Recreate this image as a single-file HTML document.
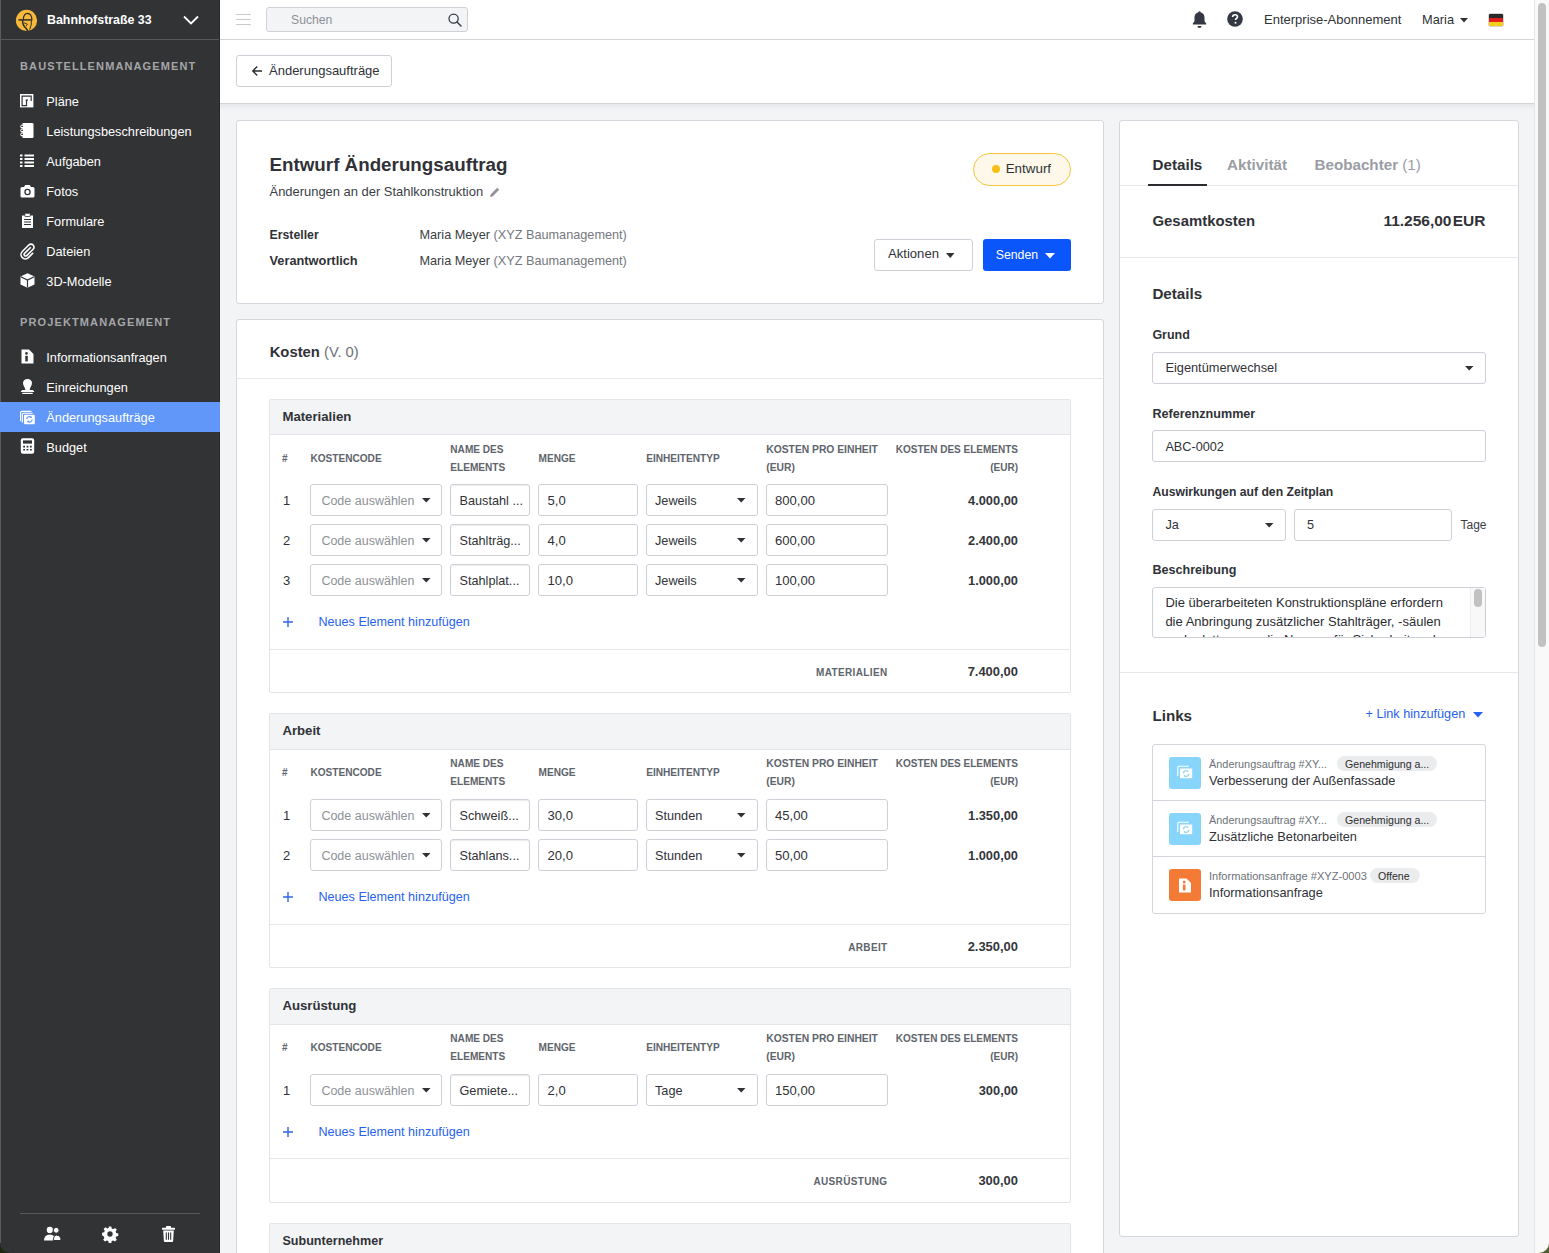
<!DOCTYPE html>
<html><head><meta charset="utf-8">
<style>
*{box-sizing:border-box;margin:0;padding:0}
html,body{width:1549px;height:1253px;overflow:hidden}
body{font-family:"Liberation Sans",sans-serif;color:#303237;background:#f3f4f6;position:relative}
.a{position:absolute}
.t{position:absolute;white-space:nowrap}
svg.a{overflow:visible}
</style></head><body>
<div class="a" style="left:0px;top:1241px;width:12px;height:12px;background:#1d2a10"></div>
<div class="a" style="left:1537px;top:1241px;width:12px;height:12px;background:#4f6030"></div>
<div class="a" style="left:220px;top:0px;width:1314px;height:40px;background:#fff;border-bottom:1px solid #d2d4d8"></div>
<div class="a" style="left:220px;top:40px;width:1314px;height:64px;background:#fff;border-bottom:1px solid #d0d2d6"></div>
<div class="a" style="left:220px;top:104px;width:1314px;height:6px;background:linear-gradient(#e7e8eb,#f3f4f6)"></div>
<div class="a" style="left:1534px;top:0px;width:15px;height:1253px;background:#f9f9f9;border-left:1px solid #e6e6e6;border-bottom-right-radius:10px"></div>
<div class="a" style="left:1538px;top:3px;width:8px;height:644px;background:#c1c1c1;border-radius:4px"></div>
<div class="a" style="left:236px;top:14px;width:15px;height:1px;background:#c9cacd"></div>
<div class="a" style="left:236px;top:19px;width:15px;height:1px;background:#c9cacd"></div>
<div class="a" style="left:236px;top:24px;width:15px;height:1px;background:#c9cacd"></div>
<div class="a" style="left:266px;top:7px;width:202px;height:25px;background:#f3f4f6;border:1px solid #cfd1d6;border-radius:3px;"></div>
<div class="t" style="top:10.17px;font-size:12.2px;line-height:20px;color:#8e9197;left:291px;">Suchen</div>
<svg class="a" style="left:448px;top:13px" width="14" height="14" viewBox="0 0 14 14"><circle cx="5.6" cy="5.6" r="4.6" fill="none" stroke="#343844" stroke-width="1.25"/><path d="M9 9L13 13" stroke="#343844" stroke-width="1.5" stroke-linecap="round"/></svg>
<svg class="a" style="left:1192px;top:11px" width="15" height="17" viewBox="0 0 15 17"><path d="M7.5 1.2c-3.2 0-5 2.3-5 5.3v3.8L.8 12.6v.9h13.4v-.9l-1.7-2.3V6.5c0-3-1.8-5.3-5-5.3z" fill="#343844"/><path d="M5.4 15a2.1 2.1 0 0 0 4.2 0z" fill="#343844"/><circle cx="7.5" cy="1.3" r="1.1" fill="#343844"/></svg>
<svg class="a" style="left:1227px;top:11px" width="16" height="16" viewBox="0 0 16 16"><circle cx="8" cy="8" r="7.8" fill="#343844"/><path d="M5.6 6.1c0-1.5 1-2.4 2.5-2.4s2.4.9 2.4 2.1c0 1.6-2 1.7-2 3.3" fill="none" stroke="#fff" stroke-width="1.6"/><circle cx="8.5" cy="11.8" r="1" fill="#fff"/></svg>
<div class="t" style="top:10.49px;font-size:13.0px;line-height:20px;color:#303237;left:1264px;">Enterprise-Abonnement</div>
<div class="t" style="top:10.06px;font-size:12.8px;line-height:20px;color:#303237;left:1422px;">Maria</div>
<svg class="a" style="left:1460px;top:18px" width="8" height="5.0" viewBox="0 0 8 5.0"><path d="M0 0H8L4.0 4.5Z" fill="#303237"/></svg>
<div class="a" style="left:1489px;top:14px;width:14px;height:12px;border-radius:1px;background:linear-gradient(#2a2a2a 0 33.3%,#dd1f1f 33.3% 66.6%,#f7cd1b 66.6%);box-shadow:0 0 0 .5px rgba(0,0,0,.35)"></div>
<div class="a" style="left:236px;top:55px;width:156px;height:32px;background:#fff;border:1px solid #cdd0d6;border-radius:3px;"></div>
<svg class="a" style="left:251px;top:65px" width="12" height="12" viewBox="0 0 12 12"><path d="M11 6H1.8M6.2 1.6L1.8 6l4.4 4.4" fill="none" stroke="#2b2d31" stroke-width="1.4"/></svg>
<div class="t" style="top:61.49px;font-size:13.0px;line-height:20px;color:#303237;left:269px;">Änderungsaufträge</div>
<div class="a" style="left:0px;top:0px;width:220px;height:1253px;background:#323335;border-right:1px solid #27282a;border-bottom-left-radius:10px"></div>
<div class="a" style="left:0px;top:0px;width:1px;height:1243px;background:#5b5c5f"></div>
<div class="a" style="left:0px;top:39px;width:219px;height:1px;background:#57585b"></div>
<svg class="a" style="left:16px;top:10px" width="21" height="21" viewBox="0 0 21 21"><circle cx="10.5" cy="10.4" r="10.6" fill="#f6b93b"/><path d="M7.3 9.6Q7.6 3.4 11.6 3.4Q15.6 3.6 15.9 9.6" fill="none" stroke="#2f2c26" stroke-width="1.1"/><path d="M2.4 9.9H16.4" stroke="#2f2c26" stroke-width="1.5"/><path d="M6.6 10Q6.4 15.5 10 18.2L11.8 21" fill="none" stroke="#2f2c26" stroke-width="1.5"/><path d="M15.4 10.2Q15.8 15.5 13.6 19.6" fill="none" stroke="#2f2c26" stroke-width="1"/><path d="M8 12.8L11.4 14.2L10 16" fill="none" stroke="#2f2c26" stroke-width=".9"/></svg>
<div class="t" style="top:9.70px;font-size:12.4px;line-height:20px;color:#fff;font-weight:bold;left:47px;">Bahnhofstraße 33</div>
<svg class="a" style="left:183px;top:15px" width="16" height="10" viewBox="0 0 16 10"><path d="M1 1.5L8 8.5L15 1.5" fill="none" stroke="#fff" stroke-width="1.8"/></svg>
<div class="t" style="top:56.19px;font-size:11px;line-height:20px;color:#a5a6a9;font-weight:bold;letter-spacing:1.12px;left:20px;">BAUSTELLENMANAGEMENT</div>
<div class="t" style="top:311.99px;font-size:11px;line-height:20px;color:#a5a6a9;font-weight:bold;letter-spacing:1.12px;left:20px;">PROJEKTMANAGEMENT</div>
<div class="a" style="left:0px;top:402px;width:220px;height:30px;background:#6097f8"></div>
<div class="t" style="top:91.58px;font-size:12.75px;line-height:20px;color:#fff;left:46.3px;">Pläne</div>
<div class="t" style="top:121.58px;font-size:12.75px;line-height:20px;color:#fff;left:46.3px;">Leistungsbeschreibungen</div>
<div class="t" style="top:151.58px;font-size:12.75px;line-height:20px;color:#fff;left:46.3px;">Aufgaben</div>
<div class="t" style="top:181.58px;font-size:12.75px;line-height:20px;color:#fff;left:46.3px;">Fotos</div>
<div class="t" style="top:211.58px;font-size:12.75px;line-height:20px;color:#fff;left:46.3px;">Formulare</div>
<div class="t" style="top:241.58px;font-size:12.75px;line-height:20px;color:#fff;left:46.3px;">Dateien</div>
<div class="t" style="top:271.58px;font-size:12.75px;line-height:20px;color:#fff;left:46.3px;">3D-Modelle</div>
<div class="t" style="top:347.58px;font-size:12.75px;line-height:20px;color:#fff;left:46.3px;">Informationsanfragen</div>
<div class="t" style="top:377.58px;font-size:12.75px;line-height:20px;color:#fff;left:46.3px;">Einreichungen</div>
<div class="t" style="top:407.58px;font-size:12.75px;line-height:20px;color:#fff;left:46.3px;">Änderungsaufträge</div>
<div class="t" style="top:437.58px;font-size:12.75px;line-height:20px;color:#fff;left:46.3px;">Budget</div>
<svg class="a" style="left:19.8px;top:93.7px" width="14" height="14" viewBox="0 0 14 14"><rect x="0" y="0" width="13.4" height="13.4" fill="#fff"/><path d="M11.15 6.9V2.05H2.1V11.55H6.5V5.9M5.6 6.1H8" fill="none" stroke="#323335" stroke-width="1.2"/></svg>
<svg class="a" style="left:18px;top:122px" width="17" height="17" viewBox="0 0 17 17"><path d="M4.6 .9H14.2Q15.5 .9 15.5 2.2V14.7Q15.5 16 14.2 16H4.6Z" fill="#fff"/><circle cx="4.3" cy="4.4" r="2" fill="#fff"/><circle cx="4.3" cy="8.4" r="2" fill="#fff"/><circle cx="4.3" cy="12.4" r="2" fill="#fff"/><path d="M3.2 4.4H5M3.2 8.4H5M3.2 12.4H5" stroke="#323335" stroke-width="1.1"/></svg>
<svg class="a" style="left:20px;top:154px" width="14" height="14" viewBox="0 0 14 14"><path d="M0 1.5h2.5M0 5h2.5M0 8.5h2.5M0 12h2.5M4.5 1.5H14M4.5 5H14M4.5 8.5H14M4.5 12H14" stroke="#fff" stroke-width="2"/></svg>
<svg class="a" style="left:20px;top:184px" width="15" height="15" viewBox="0 0 15 15"><path d="M.5 4.5q0-1.5 1.5-1.5h2l1.3-2h4.4l1.3 2h2q1.5 0 1.5 1.5v7.5q0 1.5-1.5 1.5H2q-1.5 0-1.5-1.5z" fill="#fff"/><circle cx="7.5" cy="8" r="3.2" fill="#323335"/><circle cx="7.5" cy="8" r="1.9" fill="#fff"/></svg>
<svg class="a" style="left:20px;top:213px" width="15" height="15" viewBox="0 0 15 15"><path d="M2 2.5h11v12.5H2z" fill="#fff"/><rect x="4.8" y=".3" width="5.4" height="3.2" rx=".6" fill="#fff" stroke="#323335" stroke-width=".8"/><path d="M4 6.5h7M4 9h7M4 11.5h7" stroke="#323335" stroke-width="1.1"/></svg>
<svg class="a" style="left:20px;top:243px" width="15" height="15" viewBox="0 0 15 15"><path d="M10.8 4.2L4.6 10.4a1.5 1.5 0 0 0 2.2 2.2l6.3-6.3a3 3 0 0 0-4.3-4.3L2.3 8.5a4.3 4.3 0 0 0 6.1 6.1l4.7-4.7" fill="none" stroke="#fff" stroke-width="1.6"/></svg>
<svg class="a" style="left:20px;top:273px" width="15" height="15" viewBox="0 0 15 15"><path d="M7.5.3l7 3.3v7.8l-7 3.3-7-3.3V3.6z" fill="#fff"/><path d="M.8 3.8l6.7 3.3 6.7-3.3M7.5 7.1v7.3" fill="none" stroke="#323335" stroke-width="1.2"/></svg>
<svg class="a" style="left:20px;top:349px" width="15" height="15" viewBox="0 0 15 15"><path d="M1.5.5h7.5l4.5 4.5v9.5h-12z" fill="#fff"/><path d="M9 .5v4.5h4.5" fill="#323335" opacity=".0"/><rect x="5.3" y="6.8" width="2.5" height="5.6" fill="#323335"/><circle cx="6.5" cy="4.4" r="1.3" fill="#323335"/></svg>
<svg class="a" style="left:20px;top:378px" width="15" height="17" viewBox="0 0 15 17"><path d="M7.5.9C10.3.9 12 2.6 12 5.1C12 7.4 10.3 9 9.6 11.9H5.4C4.7 9 3 7.4 3 5.1C3 2.6 4.7.9 7.5.9Z" fill="#fff"/><path d="M2.4 11.9H12.6L14.1 13.3V14H.9V13.3Z" fill="#fff"/><rect x="2.1" y="14.8" width="10.7" height="1.2" rx=".5" fill="#fff"/></svg>
<svg class="a" style="left:20px;top:410px" width="15" height="15" viewBox="0 0 15 15"><path d="M.6 11.3V2.6Q.6 1.3 1.9 1.3h9.5" fill="none" stroke="#fff" stroke-width="1.2"/><path d="M2.4 12.6V4.2q0-1 1-1h9.3" fill="none" stroke="#fff" stroke-width="1.1"/><rect x="4" y="4.8" width="10.8" height="9.4" rx="1" fill="#fff"/><path d="M6.8 9.2a2.6 2.6 0 0 1 4.6-1.6M12.2 9.6a2.6 2.6 0 0 1-4.6 1.6" fill="none" stroke="#6097f8" stroke-width="1.2"/><path d="M11.6 6.2v1.8H9.8z" fill="#6097f8"/><path d="M7.4 12.4v-1.6H9.2z" fill="#6097f8"/></svg>
<svg class="a" style="left:20px;top:438px" width="15" height="16" viewBox="0 0 15 16"><rect x=".8" y=".3" width="13.4" height="15.4" rx="2" fill="#fff"/><rect x="3" y="2.4" width="9" height="3.2" fill="#323335"/><path d="M3.2 8.6h1.8M6.6 8.6h1.8M10 8.6h1.8M3.2 11.8h1.8M6.6 11.8h1.8M10 11.8h1.8" stroke="#323335" stroke-width="1.6"/></svg>
<div class="a" style="left:20px;top:1213px;width:180px;height:1px;background:#58595c"></div>
<svg class="a" style="left:44px;top:1226px" width="17" height="15" viewBox="0 0 17 15"><circle cx="5.8" cy="3.9" r="3.1" fill="#fff"/><path d="M0 14.5q0-5.6 5.8-5.9q5.8.3 5.8 5.9z" fill="#fff"/><circle cx="12.2" cy="4.3" r="2.9" fill="#fff" stroke="#323335" stroke-width="1"/><path d="M9.2 14.5q.4-5.2 3.2-5.4q4.6.3 4.6 5.4z" fill="#fff" stroke="#323335" stroke-width="1"/></svg>
<svg class="a" style="left:102px;top:1226px" width="16" height="16" viewBox="0 0 16 16"><path d="M6.7.5h2.6l.4 2.1 1.5.6 1.8-1.2 1.8 1.8-1.2 1.8.6 1.5 2.1.4v2.6l-2.1.4-.6 1.5 1.2 1.8-1.8 1.8-1.8-1.2-1.5.6-.4 2.1H6.7l-.4-2.1-1.5-.6-1.8 1.2-1.8-1.8 1.2-1.8-.6-1.5L.1 9.3V6.7l2.1-.4.6-1.5-1.2-1.8 1.8-1.8 1.8 1.2 1.5-.6z" fill="#fff"/><circle cx="8" cy="8" r="2.7" fill="#323335"/></svg>
<svg class="a" style="left:162px;top:1226px" width="13" height="16" viewBox="0 0 13 16"><rect x="0" y="1.8" width="13" height="2" rx=".5" fill="#fff"/><rect x="4" y="0" width="5" height="2.5" rx=".7" fill="#fff"/><path d="M1.2 4.6h10.6l-.7 10.4q-.1 1-1 1H2.9q-.9 0-1-1z" fill="#fff"/><path d="M4.3 6.6v7.2M6.5 6.6v7.2M8.7 6.6v7.2" stroke="#323335" stroke-width="1.1"/></svg>
<div class="a" style="left:236px;top:120px;width:868px;height:184px;background:#fff;border:1px solid #d4d7dc;border-radius:3px"></div>
<div class="a" style="left:236px;top:319px;width:868px;height:1000px;background:#fff;border:1px solid #d4d7dc;border-radius:3px"></div>
<div class="a" style="left:1119px;top:120px;width:400px;height:1117px;background:#fff;border:1px solid #d4d7dc;border-radius:3px"></div>
<div class="t" style="top:155.28px;font-size:18.8px;line-height:20px;color:#303237;font-weight:bold;left:269.5px;">Entwurf Änderungsauftrag</div>
<div class="t" style="top:181.71px;font-size:12.95px;line-height:20px;color:#3b3e44;left:269.5px;">Änderungen an der Stahlkonstruktion</div>
<svg class="a" style="left:489px;top:187px" width="11" height="11" viewBox="0 0 11 11"><path d="M1 10l.6-2.6L8.2.8l2 2-6.6 6.6z" fill="#8f9298"/></svg>
<div class="t" style="top:225.34px;font-size:12.3px;line-height:20px;color:#303237;font-weight:bold;left:269.5px;">Ersteller</div>
<div class="t" style="top:250.96px;font-size:12.8px;line-height:20px;color:#303237;font-weight:bold;left:269.5px;">Verantwortlich</div>
<div class="t" style="top:225.20px;font-size:12.7px;line-height:20px;color:#3b3e44;left:419.5px;">Maria Meyer <span style="color:#74777e">(XYZ Baumanagement)</span></div>
<div class="t" style="top:251.00px;font-size:12.7px;line-height:20px;color:#3b3e44;left:419.5px;">Maria Meyer <span style="color:#74777e">(XYZ Baumanagement)</span></div>
<div class="a" style="left:973px;top:153px;width:98px;height:33px;background:#fdf8e9;border:1px solid #f4c43b;border-radius:17px"></div>
<div class="a" style="left:992px;top:165.2px;width:8px;height:8px;background:#f6be16;border-radius:50%"></div>
<div class="t" style="top:158.95px;font-size:13.4px;line-height:20px;color:#303237;left:1005.7px;">Entwurf</div>
<div class="a" style="left:874px;top:239px;width:99px;height:32px;background:#fff;border:1px solid #cdd0d6;border-radius:3px;"></div>
<div class="t" style="top:244.46px;font-size:13.1px;line-height:20px;color:#303237;left:888px;">Aktionen</div>
<svg class="a" style="left:945.5px;top:252.5px" width="8.5" height="5.5" viewBox="0 0 8.5 5.5"><path d="M0 0H8.5L4.25 5Z" fill="#303237"/></svg>
<div class="a" style="left:983px;top:239px;width:88px;height:32px;background:#0b56fb;border-radius:3px"></div>
<div class="t" style="top:245.24px;font-size:12.3px;line-height:20px;color:#fff;left:995.7px;">Senden</div>
<svg class="a" style="left:1045.2px;top:253px" width="10" height="6.0" viewBox="0 0 10 6.0"><path d="M0 0H10L5.0 5.5Z" fill="#fff"/></svg>
<div class="t" style="top:341.57px;font-size:14.8px;line-height:20px;color:#303237;font-weight:bold;left:269.7px;">Kosten <span style="font-weight:normal;color:#6d7178">(V. 0)</span></div>
<div class="a" style="left:237px;top:378px;width:866px;height:1px;background:#e6e8eb"></div>
<div class="a" style="left:269px;top:399px;width:802px;height:294px;background:#fff;border:1px solid #e2e4e8;border-radius:2px"></div>
<div class="a" style="left:270px;top:400px;width:800px;height:35px;background:#f3f4f6;border-bottom:1px solid #e2e4e8"></div>
<div class="t" style="top:407.02px;font-size:13.2px;line-height:20px;color:#303237;font-weight:bold;left:282.4px;">Materialien</div>
<div class="t" style="top:449.33px;font-size:10px;line-height:20px;color:#60646b;font-weight:bold;left:282px;">#</div>
<div class="t" style="top:449.30px;font-size:10.1px;line-height:20px;color:#60646b;font-weight:bold;left:310.4px;">KOSTENCODE</div>
<div class="t" style="top:439.70px;font-size:10.1px;line-height:20px;color:#60646b;font-weight:bold;left:450.3px;">NAME DES</div>
<div class="t" style="top:458.10px;font-size:10.1px;line-height:20px;color:#60646b;font-weight:bold;left:450.3px;">ELEMENTS</div>
<div class="t" style="top:449.30px;font-size:10.1px;line-height:20px;color:#60646b;font-weight:bold;left:538.5px;">MENGE</div>
<div class="t" style="top:449.30px;font-size:10.1px;line-height:20px;color:#60646b;font-weight:bold;left:646.2px;">EINHEITENTYP</div>
<div class="t" style="top:439.63px;font-size:10.3px;line-height:20px;color:#60646b;font-weight:bold;left:766.3px;">KOSTEN PRO EINHEIT</div>
<div class="t" style="top:458.03px;font-size:10.3px;line-height:20px;color:#60646b;font-weight:bold;left:766.3px;">(EUR)</div>
<div class="t" style="top:439.73px;font-size:10.0px;line-height:20px;color:#60646b;font-weight:bold;left:218px;width:800px;text-align:right;">KOSTEN DES ELEMENTS</div>
<div class="t" style="top:458.13px;font-size:10.0px;line-height:20px;color:#60646b;font-weight:bold;left:218px;width:800px;text-align:right;">(EUR)</div>
<div class="t" style="top:491.19px;font-size:13px;line-height:20px;color:#303237;left:283px;">1</div>
<div class="a" style="left:310px;top:484px;width:132px;height:32px;background:#fff;border:1px solid #cdd0d6;border-radius:3px;"></div>
<div class="t" style="top:491.37px;font-size:12.5px;line-height:20px;color:#8e9197;left:321.4px;">Code auswählen</div>
<svg class="a" style="left:422px;top:498px" width="8.5" height="5.0" viewBox="0 0 8.5 5.0"><path d="M0 0H8.5L4.25 4.5Z" fill="#303237"/></svg>
<div class="a" style="left:450px;top:484px;width:80px;height:32px;background:#fff;border:1px solid #cdd0d6;border-radius:3px;box-shadow:inset 0 1px 1px rgba(0,0,0,.08)"></div>
<div class="t" style="top:491.30px;font-size:12.7px;line-height:20px;color:#303237;left:459.5px;">Baustahl ...</div>
<div class="a" style="left:538px;top:484px;width:100px;height:32px;background:#fff;border:1px solid #cdd0d6;border-radius:3px;"></div>
<div class="t" style="top:491.16px;font-size:13.1px;line-height:20px;color:#303237;left:547.5px;">5,0</div>
<div class="a" style="left:646px;top:484px;width:112px;height:32px;background:#fff;border:1px solid #cdd0d6;border-radius:3px;"></div>
<div class="t" style="top:491.30px;font-size:12.7px;line-height:20px;color:#303237;left:655px;">Jeweils</div>
<svg class="a" style="left:737px;top:498px" width="8.5" height="5.0" viewBox="0 0 8.5 5.0"><path d="M0 0H8.5L4.25 4.5Z" fill="#303237"/></svg>
<div class="a" style="left:766px;top:484px;width:122px;height:32px;background:#fff;border:1px solid #cdd0d6;border-radius:3px;"></div>
<div class="t" style="top:491.16px;font-size:13.1px;line-height:20px;color:#303237;left:775px;">800,00</div>
<div class="t" style="top:491.24px;font-size:12.85px;line-height:20px;color:#34363b;font-weight:bold;left:218px;width:800px;text-align:right;">4.000,00</div>
<div class="t" style="top:531.19px;font-size:13px;line-height:20px;color:#303237;left:283px;">2</div>
<div class="a" style="left:310px;top:524px;width:132px;height:32px;background:#fff;border:1px solid #cdd0d6;border-radius:3px;"></div>
<div class="t" style="top:531.37px;font-size:12.5px;line-height:20px;color:#8e9197;left:321.4px;">Code auswählen</div>
<svg class="a" style="left:422px;top:538px" width="8.5" height="5.0" viewBox="0 0 8.5 5.0"><path d="M0 0H8.5L4.25 4.5Z" fill="#303237"/></svg>
<div class="a" style="left:450px;top:524px;width:80px;height:32px;background:#fff;border:1px solid #cdd0d6;border-radius:3px;box-shadow:inset 0 1px 1px rgba(0,0,0,.08)"></div>
<div class="t" style="top:531.30px;font-size:12.7px;line-height:20px;color:#303237;left:459.5px;">Stahlträg...</div>
<div class="a" style="left:538px;top:524px;width:100px;height:32px;background:#fff;border:1px solid #cdd0d6;border-radius:3px;"></div>
<div class="t" style="top:531.16px;font-size:13.1px;line-height:20px;color:#303237;left:547.5px;">4,0</div>
<div class="a" style="left:646px;top:524px;width:112px;height:32px;background:#fff;border:1px solid #cdd0d6;border-radius:3px;"></div>
<div class="t" style="top:531.30px;font-size:12.7px;line-height:20px;color:#303237;left:655px;">Jeweils</div>
<svg class="a" style="left:737px;top:538px" width="8.5" height="5.0" viewBox="0 0 8.5 5.0"><path d="M0 0H8.5L4.25 4.5Z" fill="#303237"/></svg>
<div class="a" style="left:766px;top:524px;width:122px;height:32px;background:#fff;border:1px solid #cdd0d6;border-radius:3px;"></div>
<div class="t" style="top:531.16px;font-size:13.1px;line-height:20px;color:#303237;left:775px;">600,00</div>
<div class="t" style="top:531.24px;font-size:12.85px;line-height:20px;color:#34363b;font-weight:bold;left:218px;width:800px;text-align:right;">2.400,00</div>
<div class="t" style="top:571.19px;font-size:13px;line-height:20px;color:#303237;left:283px;">3</div>
<div class="a" style="left:310px;top:564px;width:132px;height:32px;background:#fff;border:1px solid #cdd0d6;border-radius:3px;"></div>
<div class="t" style="top:571.37px;font-size:12.5px;line-height:20px;color:#8e9197;left:321.4px;">Code auswählen</div>
<svg class="a" style="left:422px;top:578px" width="8.5" height="5.0" viewBox="0 0 8.5 5.0"><path d="M0 0H8.5L4.25 4.5Z" fill="#303237"/></svg>
<div class="a" style="left:450px;top:564px;width:80px;height:32px;background:#fff;border:1px solid #cdd0d6;border-radius:3px;box-shadow:inset 0 1px 1px rgba(0,0,0,.08)"></div>
<div class="t" style="top:571.30px;font-size:12.7px;line-height:20px;color:#303237;left:459.5px;">Stahlplat...</div>
<div class="a" style="left:538px;top:564px;width:100px;height:32px;background:#fff;border:1px solid #cdd0d6;border-radius:3px;"></div>
<div class="t" style="top:571.16px;font-size:13.1px;line-height:20px;color:#303237;left:547.5px;">10,0</div>
<div class="a" style="left:646px;top:564px;width:112px;height:32px;background:#fff;border:1px solid #cdd0d6;border-radius:3px;"></div>
<div class="t" style="top:571.30px;font-size:12.7px;line-height:20px;color:#303237;left:655px;">Jeweils</div>
<svg class="a" style="left:737px;top:578px" width="8.5" height="5.0" viewBox="0 0 8.5 5.0"><path d="M0 0H8.5L4.25 4.5Z" fill="#303237"/></svg>
<div class="a" style="left:766px;top:564px;width:122px;height:32px;background:#fff;border:1px solid #cdd0d6;border-radius:3px;"></div>
<div class="t" style="top:571.16px;font-size:13.1px;line-height:20px;color:#303237;left:775px;">100,00</div>
<div class="t" style="top:571.24px;font-size:12.85px;line-height:20px;color:#34363b;font-weight:bold;left:218px;width:800px;text-align:right;">1.000,00</div>
<svg class="a" style="left:283px;top:617px" width="10" height="10" viewBox="0 0 10 10"><path d="M5 0v10M0 5h10" stroke="#2f66ee" stroke-width="1.4"/></svg>
<div class="t" style="top:612.13px;font-size:12.6px;line-height:20px;color:#2762ef;left:318.5px;">Neues Element hinzufügen</div>
<div class="a" style="left:270px;top:649px;width:800px;height:1px;background:#e6e8eb"></div>
<div class="t" style="top:662.63px;font-size:10.0px;line-height:20px;color:#60646b;font-weight:bold;letter-spacing:0.35px;left:87.5px;width:800px;text-align:right;">MATERIALIEN</div>
<div class="t" style="top:661.61px;font-size:12.95px;line-height:20px;color:#34363b;font-weight:bold;left:218px;width:800px;text-align:right;">7.400,00</div>
<div class="a" style="left:269px;top:713px;width:802px;height:255px;background:#fff;border:1px solid #e2e4e8;border-radius:2px"></div>
<div class="a" style="left:270px;top:714px;width:800px;height:36px;background:#f3f4f6;border-bottom:1px solid #e2e4e8"></div>
<div class="t" style="top:721.02px;font-size:13.2px;line-height:20px;color:#303237;font-weight:bold;left:282.4px;">Arbeit</div>
<div class="t" style="top:763.33px;font-size:10px;line-height:20px;color:#60646b;font-weight:bold;left:282px;">#</div>
<div class="t" style="top:763.30px;font-size:10.1px;line-height:20px;color:#60646b;font-weight:bold;left:310.4px;">KOSTENCODE</div>
<div class="t" style="top:753.70px;font-size:10.1px;line-height:20px;color:#60646b;font-weight:bold;left:450.3px;">NAME DES</div>
<div class="t" style="top:772.10px;font-size:10.1px;line-height:20px;color:#60646b;font-weight:bold;left:450.3px;">ELEMENTS</div>
<div class="t" style="top:763.30px;font-size:10.1px;line-height:20px;color:#60646b;font-weight:bold;left:538.5px;">MENGE</div>
<div class="t" style="top:763.30px;font-size:10.1px;line-height:20px;color:#60646b;font-weight:bold;left:646.2px;">EINHEITENTYP</div>
<div class="t" style="top:753.63px;font-size:10.3px;line-height:20px;color:#60646b;font-weight:bold;left:766.3px;">KOSTEN PRO EINHEIT</div>
<div class="t" style="top:772.03px;font-size:10.3px;line-height:20px;color:#60646b;font-weight:bold;left:766.3px;">(EUR)</div>
<div class="t" style="top:753.73px;font-size:10.0px;line-height:20px;color:#60646b;font-weight:bold;left:218px;width:800px;text-align:right;">KOSTEN DES ELEMENTS</div>
<div class="t" style="top:772.13px;font-size:10.0px;line-height:20px;color:#60646b;font-weight:bold;left:218px;width:800px;text-align:right;">(EUR)</div>
<div class="t" style="top:806.19px;font-size:13px;line-height:20px;color:#303237;left:283px;">1</div>
<div class="a" style="left:310px;top:799px;width:132px;height:32px;background:#fff;border:1px solid #cdd0d6;border-radius:3px;"></div>
<div class="t" style="top:806.37px;font-size:12.5px;line-height:20px;color:#8e9197;left:321.4px;">Code auswählen</div>
<svg class="a" style="left:422px;top:813px" width="8.5" height="5.0" viewBox="0 0 8.5 5.0"><path d="M0 0H8.5L4.25 4.5Z" fill="#303237"/></svg>
<div class="a" style="left:450px;top:799px;width:80px;height:32px;background:#fff;border:1px solid #cdd0d6;border-radius:3px;box-shadow:inset 0 1px 1px rgba(0,0,0,.08)"></div>
<div class="t" style="top:806.30px;font-size:12.7px;line-height:20px;color:#303237;left:459.5px;">Schweiß...</div>
<div class="a" style="left:538px;top:799px;width:100px;height:32px;background:#fff;border:1px solid #cdd0d6;border-radius:3px;"></div>
<div class="t" style="top:806.16px;font-size:13.1px;line-height:20px;color:#303237;left:547.5px;">30,0</div>
<div class="a" style="left:646px;top:799px;width:112px;height:32px;background:#fff;border:1px solid #cdd0d6;border-radius:3px;"></div>
<div class="t" style="top:806.30px;font-size:12.7px;line-height:20px;color:#303237;left:655px;">Stunden</div>
<svg class="a" style="left:737px;top:813px" width="8.5" height="5.0" viewBox="0 0 8.5 5.0"><path d="M0 0H8.5L4.25 4.5Z" fill="#303237"/></svg>
<div class="a" style="left:766px;top:799px;width:122px;height:32px;background:#fff;border:1px solid #cdd0d6;border-radius:3px;"></div>
<div class="t" style="top:806.16px;font-size:13.1px;line-height:20px;color:#303237;left:775px;">45,00</div>
<div class="t" style="top:806.24px;font-size:12.85px;line-height:20px;color:#34363b;font-weight:bold;left:218px;width:800px;text-align:right;">1.350,00</div>
<div class="t" style="top:846.19px;font-size:13px;line-height:20px;color:#303237;left:283px;">2</div>
<div class="a" style="left:310px;top:839px;width:132px;height:32px;background:#fff;border:1px solid #cdd0d6;border-radius:3px;"></div>
<div class="t" style="top:846.37px;font-size:12.5px;line-height:20px;color:#8e9197;left:321.4px;">Code auswählen</div>
<svg class="a" style="left:422px;top:853px" width="8.5" height="5.0" viewBox="0 0 8.5 5.0"><path d="M0 0H8.5L4.25 4.5Z" fill="#303237"/></svg>
<div class="a" style="left:450px;top:839px;width:80px;height:32px;background:#fff;border:1px solid #cdd0d6;border-radius:3px;box-shadow:inset 0 1px 1px rgba(0,0,0,.08)"></div>
<div class="t" style="top:846.30px;font-size:12.7px;line-height:20px;color:#303237;left:459.5px;">Stahlans...</div>
<div class="a" style="left:538px;top:839px;width:100px;height:32px;background:#fff;border:1px solid #cdd0d6;border-radius:3px;"></div>
<div class="t" style="top:846.16px;font-size:13.1px;line-height:20px;color:#303237;left:547.5px;">20,0</div>
<div class="a" style="left:646px;top:839px;width:112px;height:32px;background:#fff;border:1px solid #cdd0d6;border-radius:3px;"></div>
<div class="t" style="top:846.30px;font-size:12.7px;line-height:20px;color:#303237;left:655px;">Stunden</div>
<svg class="a" style="left:737px;top:853px" width="8.5" height="5.0" viewBox="0 0 8.5 5.0"><path d="M0 0H8.5L4.25 4.5Z" fill="#303237"/></svg>
<div class="a" style="left:766px;top:839px;width:122px;height:32px;background:#fff;border:1px solid #cdd0d6;border-radius:3px;"></div>
<div class="t" style="top:846.16px;font-size:13.1px;line-height:20px;color:#303237;left:775px;">50,00</div>
<div class="t" style="top:846.24px;font-size:12.85px;line-height:20px;color:#34363b;font-weight:bold;left:218px;width:800px;text-align:right;">1.000,00</div>
<svg class="a" style="left:283px;top:892px" width="10" height="10" viewBox="0 0 10 10"><path d="M5 0v10M0 5h10" stroke="#2f66ee" stroke-width="1.4"/></svg>
<div class="t" style="top:887.13px;font-size:12.6px;line-height:20px;color:#2762ef;left:318.5px;">Neues Element hinzufügen</div>
<div class="a" style="left:270px;top:924px;width:800px;height:1px;background:#e6e8eb"></div>
<div class="t" style="top:937.63px;font-size:10.0px;line-height:20px;color:#60646b;font-weight:bold;letter-spacing:0.35px;left:87.5px;width:800px;text-align:right;">ARBEIT</div>
<div class="t" style="top:936.61px;font-size:12.95px;line-height:20px;color:#34363b;font-weight:bold;left:218px;width:800px;text-align:right;">2.350,00</div>
<div class="a" style="left:269px;top:988px;width:802px;height:215px;background:#fff;border:1px solid #e2e4e8;border-radius:2px"></div>
<div class="a" style="left:270px;top:989px;width:800px;height:36px;background:#f3f4f6;border-bottom:1px solid #e2e4e8"></div>
<div class="t" style="top:996.02px;font-size:13.2px;line-height:20px;color:#303237;font-weight:bold;left:282.4px;">Ausrüstung</div>
<div class="t" style="top:1038.33px;font-size:10px;line-height:20px;color:#60646b;font-weight:bold;left:282px;">#</div>
<div class="t" style="top:1038.30px;font-size:10.1px;line-height:20px;color:#60646b;font-weight:bold;left:310.4px;">KOSTENCODE</div>
<div class="t" style="top:1028.70px;font-size:10.1px;line-height:20px;color:#60646b;font-weight:bold;left:450.3px;">NAME DES</div>
<div class="t" style="top:1047.10px;font-size:10.1px;line-height:20px;color:#60646b;font-weight:bold;left:450.3px;">ELEMENTS</div>
<div class="t" style="top:1038.30px;font-size:10.1px;line-height:20px;color:#60646b;font-weight:bold;left:538.5px;">MENGE</div>
<div class="t" style="top:1038.30px;font-size:10.1px;line-height:20px;color:#60646b;font-weight:bold;left:646.2px;">EINHEITENTYP</div>
<div class="t" style="top:1028.63px;font-size:10.3px;line-height:20px;color:#60646b;font-weight:bold;left:766.3px;">KOSTEN PRO EINHEIT</div>
<div class="t" style="top:1047.03px;font-size:10.3px;line-height:20px;color:#60646b;font-weight:bold;left:766.3px;">(EUR)</div>
<div class="t" style="top:1028.73px;font-size:10.0px;line-height:20px;color:#60646b;font-weight:bold;left:218px;width:800px;text-align:right;">KOSTEN DES ELEMENTS</div>
<div class="t" style="top:1047.13px;font-size:10.0px;line-height:20px;color:#60646b;font-weight:bold;left:218px;width:800px;text-align:right;">(EUR)</div>
<div class="t" style="top:1081.19px;font-size:13px;line-height:20px;color:#303237;left:283px;">1</div>
<div class="a" style="left:310px;top:1074px;width:132px;height:32px;background:#fff;border:1px solid #cdd0d6;border-radius:3px;"></div>
<div class="t" style="top:1081.37px;font-size:12.5px;line-height:20px;color:#8e9197;left:321.4px;">Code auswählen</div>
<svg class="a" style="left:422px;top:1088px" width="8.5" height="5.0" viewBox="0 0 8.5 5.0"><path d="M0 0H8.5L4.25 4.5Z" fill="#303237"/></svg>
<div class="a" style="left:450px;top:1074px;width:80px;height:32px;background:#fff;border:1px solid #cdd0d6;border-radius:3px;box-shadow:inset 0 1px 1px rgba(0,0,0,.08)"></div>
<div class="t" style="top:1081.30px;font-size:12.7px;line-height:20px;color:#303237;left:459.5px;">Gemiete...</div>
<div class="a" style="left:538px;top:1074px;width:100px;height:32px;background:#fff;border:1px solid #cdd0d6;border-radius:3px;"></div>
<div class="t" style="top:1081.16px;font-size:13.1px;line-height:20px;color:#303237;left:547.5px;">2,0</div>
<div class="a" style="left:646px;top:1074px;width:112px;height:32px;background:#fff;border:1px solid #cdd0d6;border-radius:3px;"></div>
<div class="t" style="top:1081.30px;font-size:12.7px;line-height:20px;color:#303237;left:655px;">Tage</div>
<svg class="a" style="left:737px;top:1088px" width="8.5" height="5.0" viewBox="0 0 8.5 5.0"><path d="M0 0H8.5L4.25 4.5Z" fill="#303237"/></svg>
<div class="a" style="left:766px;top:1074px;width:122px;height:32px;background:#fff;border:1px solid #cdd0d6;border-radius:3px;"></div>
<div class="t" style="top:1081.16px;font-size:13.1px;line-height:20px;color:#303237;left:775px;">150,00</div>
<div class="t" style="top:1081.24px;font-size:12.85px;line-height:20px;color:#34363b;font-weight:bold;left:218px;width:800px;text-align:right;">300,00</div>
<svg class="a" style="left:283px;top:1127px" width="10" height="10" viewBox="0 0 10 10"><path d="M5 0v10M0 5h10" stroke="#2f66ee" stroke-width="1.4"/></svg>
<div class="t" style="top:1122.13px;font-size:12.6px;line-height:20px;color:#2762ef;left:318.5px;">Neues Element hinzufügen</div>
<div class="a" style="left:270px;top:1158px;width:800px;height:1px;background:#e6e8eb"></div>
<div class="t" style="top:1171.63px;font-size:10.0px;line-height:20px;color:#60646b;font-weight:bold;letter-spacing:0.35px;left:87.5px;width:800px;text-align:right;">AUSRÜSTUNG</div>
<div class="t" style="top:1170.61px;font-size:12.95px;line-height:20px;color:#34363b;font-weight:bold;left:218px;width:800px;text-align:right;">300,00</div>
<div class="a" style="left:269px;top:1223px;width:802px;height:60px;background:#f3f4f6;border:1px solid #e2e4e8;border-radius:2px"></div>
<div class="t" style="top:1231.23px;font-size:12.6px;line-height:20px;color:#303237;font-weight:bold;left:282.4px;">Subunternehmer</div>
<div class="t" style="top:154.73px;font-size:15.2px;line-height:20px;color:#303237;font-weight:bold;left:1152.5px;">Details</div>
<div class="t" style="top:154.73px;font-size:15.2px;line-height:20px;color:#9a9da3;font-weight:bold;left:1227.1px;">Aktivität</div>
<div class="t" style="top:154.73px;font-size:15.2px;line-height:20px;color:#9a9da3;font-weight:bold;left:1314.5px;">Beobachter <span style="font-weight:normal">(1)</span></div>
<div class="a" style="left:1120px;top:185px;width:398px;height:1px;background:#e6e8eb"></div>
<div class="a" style="left:1148px;top:184px;width:59px;height:2px;background:#2b2d31"></div>
<div class="t" style="top:211.33px;font-size:14.9px;line-height:20px;color:#303237;font-weight:bold;left:1152.5px;">Gesamtkosten</div>
<div class="t" style="top:211.43px;font-size:15.5px;line-height:20px;color:#303237;font-weight:bold;left:685.5px;width:800px;text-align:right;">11.256,00&#8202;EUR</div>
<div class="a" style="left:1120px;top:257px;width:398px;height:1px;background:#e6e8eb"></div>
<div class="t" style="top:283.73px;font-size:15.2px;line-height:20px;color:#303237;font-weight:bold;left:1152.4px;">Details</div>
<div class="t" style="top:324.77px;font-size:12.5px;line-height:20px;color:#303237;font-weight:bold;left:1152.4px;">Grund</div>
<div class="a" style="left:1152px;top:352px;width:334px;height:32px;background:#fff;border:1px solid #cdd0d6;border-radius:3px;"></div>
<div class="t" style="top:357.56px;font-size:12.8px;line-height:20px;color:#303237;left:1165.4px;">Eigentümerwechsel</div>
<svg class="a" style="left:1464.5px;top:366px" width="8.5" height="5.0" viewBox="0 0 8.5 5.0"><path d="M0 0H8.5L4.25 4.5Z" fill="#303237"/></svg>
<div class="t" style="top:403.93px;font-size:12.6px;line-height:20px;color:#303237;font-weight:bold;left:1152.4px;">Referenznummer</div>
<div class="a" style="left:1152px;top:430px;width:334px;height:32px;background:#fff;border:1px solid #cdd0d6;border-radius:3px;"></div>
<div class="t" style="top:436.60px;font-size:12.7px;line-height:20px;color:#303237;left:1165.4px;">ABC-0002</div>
<div class="t" style="top:482.07px;font-size:12.2px;line-height:20px;color:#303237;font-weight:bold;left:1152.4px;">Auswirkungen auf den Zeitplan</div>
<div class="a" style="left:1152px;top:509px;width:134px;height:32px;background:#fff;border:1px solid #cdd0d6;border-radius:3px;"></div>
<div class="t" style="top:515.10px;font-size:12.7px;line-height:20px;color:#303237;left:1165.4px;">Ja</div>
<svg class="a" style="left:1264.5px;top:523px" width="8.5" height="5.0" viewBox="0 0 8.5 5.0"><path d="M0 0H8.5L4.25 4.5Z" fill="#303237"/></svg>
<div class="a" style="left:1294px;top:509px;width:158px;height:32px;background:#fff;border:1px solid #cdd0d6;border-radius:3px;"></div>
<div class="t" style="top:515.10px;font-size:12.7px;line-height:20px;color:#303237;left:1307px;">5</div>
<div class="t" style="top:514.74px;font-size:12.0px;line-height:20px;color:#3b3e44;left:1460.5px;">Tage</div>
<div class="t" style="top:560.43px;font-size:12.6px;line-height:20px;color:#303237;font-weight:bold;left:1152.4px;">Beschreibung</div>
<div class="a" style="left:1152px;top:587px;width:334px;height:51px;background:#fff;border:1px solid #cdd0d6;border-radius:3px;"></div>
<div class="a" style="left:1153px;top:588px;width:332px;height:49px;overflow:hidden"><div style="position:absolute;left:12.4px;top:6px;width:320px;white-space:nowrap;font-size:13.0px;line-height:18.6px;color:#2b2d31">Die überarbeiteten Konstruktionspläne erfordern<br>die Anbringung zusätzlicher Stahlträger, -säulen<br>und -platten, um die Normen für Sicherheit und</div></div>
<div class="a" style="left:1470px;top:588px;width:15px;height:49px;background:#f8f8f8;border-left:1px solid #ececec"></div>
<div class="a" style="left:1474px;top:589px;width:8px;height:18px;background:#c1c1c1;border-radius:4px"></div>
<div class="a" style="left:1120px;top:672px;width:398px;height:1px;background:#e6e8eb"></div>
<div class="t" style="top:706.33px;font-size:15.2px;line-height:20px;color:#303237;font-weight:bold;left:1152.4px;">Links</div>
<div class="t" style="top:704.30px;font-size:12.7px;line-height:20px;color:#2762ef;left:665.3px;width:800px;text-align:right;">+ Link hinzufügen</div>
<svg class="a" style="left:1473px;top:712px" width="10" height="6.0" viewBox="0 0 10 6.0"><path d="M0 0H10L5.0 5.5Z" fill="#2762ef"/></svg>
<div class="a" style="left:1152px;top:744px;width:334px;height:170px;background:#fff;border:1px solid #d3d6db;border-radius:3px"></div>
<div class="a" style="left:1153px;top:800px;width:332px;height:1px;background:#d3d6db"></div>
<div class="a" style="left:1153px;top:856px;width:332px;height:1px;background:#d3d6db"></div>
<div class="a" style="left:1169px;top:757px;width:32px;height:32px;background:#87d5fa;border-radius:3px"></div>
<svg class="a" style="left:1177px;top:765px" width="16" height="16" viewBox="0 0 16 16"><path d="M.8 11V2.2Q.8 1.2 1.8 1.2H12" fill="none" stroke="#fff" stroke-width="1.1"/><rect x="3" y="3.6" width="12.2" height="9.6" rx="1" fill="#fff"/><path d="M6.4 8.4a2.7 2.7 0 0 1 4.8-1.6M11.8 8.8a2.7 2.7 0 0 1-4.8 1.6" fill="none" stroke="#87d5fa" stroke-width="1.2"/></svg>
<div class="t" style="top:753.72px;font-size:10.9px;line-height:20px;color:#6d7178;left:1209px;">Änderungsauftrag #XY...</div>
<div class="a" style="left:1337px;top:756px;width:100px;height:15px;background:#ebecee;border-radius:8px"></div>
<div class="t" style="top:753.82px;font-size:10.6px;line-height:20px;color:#2b2d31;left:1345px;">Genehmigung a...</div>
<div class="t" style="top:770.56px;font-size:12.8px;line-height:20px;color:#303237;left:1209px;">Verbesserung der Außenfassade</div>
<div class="a" style="left:1169px;top:813px;width:32px;height:32px;background:#87d5fa;border-radius:3px"></div>
<svg class="a" style="left:1177px;top:821px" width="16" height="16" viewBox="0 0 16 16"><path d="M.8 11V2.2Q.8 1.2 1.8 1.2H12" fill="none" stroke="#fff" stroke-width="1.1"/><rect x="3" y="3.6" width="12.2" height="9.6" rx="1" fill="#fff"/><path d="M6.4 8.4a2.7 2.7 0 0 1 4.8-1.6M11.8 8.8a2.7 2.7 0 0 1-4.8 1.6" fill="none" stroke="#87d5fa" stroke-width="1.2"/></svg>
<div class="t" style="top:809.72px;font-size:10.9px;line-height:20px;color:#6d7178;left:1209px;">Änderungsauftrag #XY...</div>
<div class="a" style="left:1337px;top:812px;width:100px;height:15px;background:#ebecee;border-radius:8px"></div>
<div class="t" style="top:809.82px;font-size:10.6px;line-height:20px;color:#2b2d31;left:1345px;">Genehmigung a...</div>
<div class="t" style="top:826.56px;font-size:12.8px;line-height:20px;color:#303237;left:1209px;">Zusätzliche Betonarbeiten</div>
<div class="a" style="left:1169px;top:869px;width:32px;height:32px;background:#f47b36;border-radius:3px"></div>
<svg class="a" style="left:1178px;top:878px" width="14" height="15" viewBox="0 0 14 15"><path d="M1 .5h7.5L13 5v9.5H1z" fill="#fff"/><rect x="4.9" y="6.6" width="2.6" height="5.8" fill="#f47b36"/><circle cx="6.2" cy="4.2" r="1.35" fill="#f47b36"/></svg>
<div class="t" style="top:865.65px;font-size:11.1px;line-height:20px;color:#6d7178;left:1209px;">Informationsanfrage #XYZ-0003</div>
<div class="a" style="left:1370px;top:868px;width:50px;height:15px;background:#ebecee;border-radius:8px"></div>
<div class="t" style="top:865.82px;font-size:10.6px;line-height:20px;color:#2b2d31;left:1378px;">Offene</div>
<div class="t" style="top:882.56px;font-size:12.8px;line-height:20px;color:#303237;left:1209px;">Informationsanfrage</div>
</body></html>
